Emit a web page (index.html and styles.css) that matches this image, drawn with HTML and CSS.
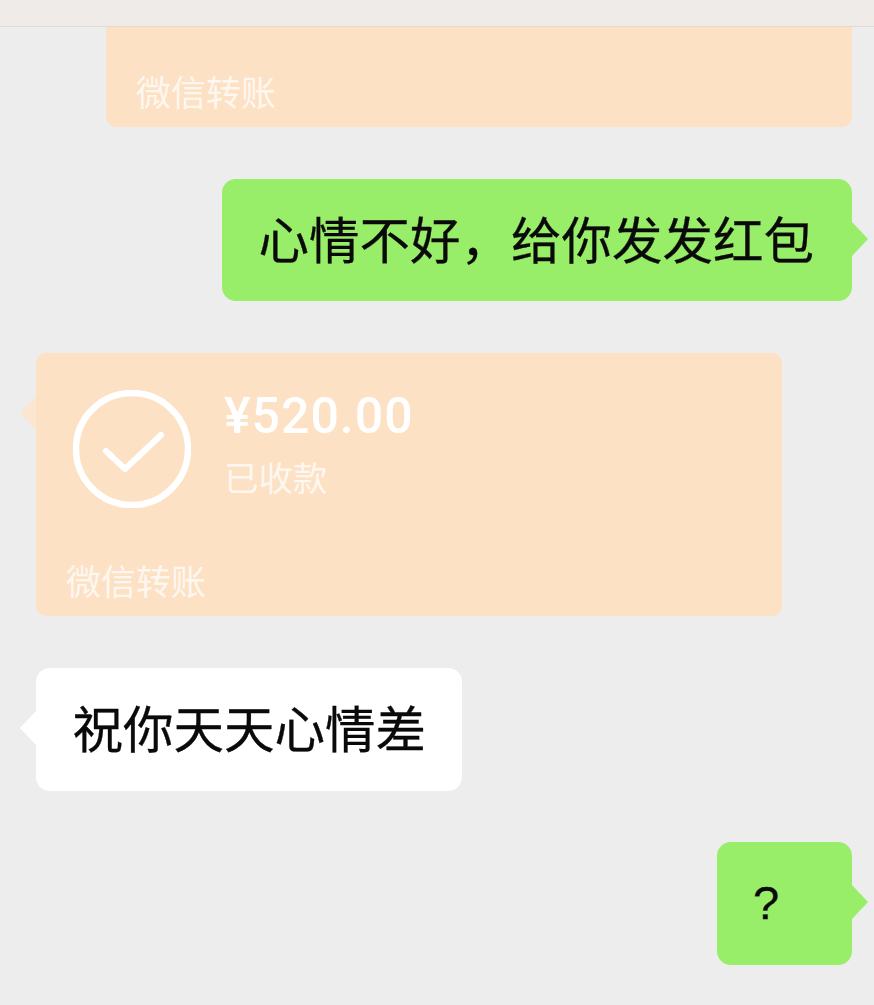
FILE: index.html
```html
<!DOCTYPE html>
<html lang="zh-CN">
<head>
<meta charset="utf-8">
<title>微信聊天</title>
<link rel="stylesheet" href="styles.css">
</head>
<body>
<div class="screen">
  <header class="topbar"></header>
  <main class="chat">
    <div class="transfer transfer-cut self">
      <div class="transfer-foot">微信转账</div>
    </div>
    <div class="bubble green self tail-right wide">心情不好，给你发发红包</div>
    <div class="transfer transfer-full other tail-left">
      <div class="transfer-main">
        <svg class="check" viewBox="0 0 118 118" aria-hidden="true">
          <circle cx="59" cy="59" r="56" fill="none" stroke="#fff" stroke-width="6.5"/>
          <path d="M33 61 L52 79 L88 45" fill="none" stroke="#fff" stroke-width="6" stroke-linecap="round" stroke-linejoin="round"/>
        </svg>
        <div class="transfer-info">
          <div class="amount">¥520.00</div>
          <div class="status">已收款</div>
        </div>
      </div>
      <div class="transfer-foot">微信转账</div>
    </div>
    <div class="bubble white other tail-left">祝你天天心情差</div>
    <div class="bubble green self tail-right tiny">?</div>
  </main>
</div>
</body>
</html>
```
FILE: styles.css
```css
* { box-sizing: border-box; }
html, body { margin: 0; padding: 0; }
body {
  width: 874px;
  height: 1005px;
  overflow: hidden;
  background: #ededed;
  font-family: "Noto Sans CJK SC", "Noto Sans", sans-serif;
}
.screen { display: flex; flex-direction: column; height: 1005px; overflow: hidden; }
.topbar {
  flex: none;
  height: 27px;
  background: #eeebe8;
  border-bottom: 1px solid #e3dbd3;
}
.chat {
  display: flex;
  flex-direction: column;
  gap: 52px;
  padding: 0 22px 0 36px;
}
.self { align-self: flex-end; }
.other { align-self: flex-start; }
.bubble {
  position: relative;
  height: 122px;
  display: flex;
  align-items: center;
  padding: 0 36px 6px 36.5px;
  font-size: 50.5px;
  line-height: 1;
  color: #0a0a0a;
  -webkit-text-stroke: 0.3px #0a0a0a;
  border-radius: 14px;
  white-space: nowrap;
}
.bubble.green { background: #98ed69; }
.bubble.white { background: #ffffff; height: 123px; }
.bubble.wide { width: 630px; }
.bubble.tiny {
  width: 135px;
  height: 123px;
  margin-top: -1px;
  padding: 0 0 2px 36px;
  font-family: "Liberation Sans", sans-serif;
  font-size: 47px;
}
.tail-right::after,
.tail-left::before {
  content: "";
  position: absolute;
  top: 43px;
  width: 16px;
  height: 34px;
}
.tail-right::after {
  left: 100%;
  background: #98ed69;
  clip-path: polygon(0 0, 100% 50%, 0 100%);
}
.tail-left::before {
  right: 100%;
  background: #ffffff;
  clip-path: polygon(100% 0, 0 50%, 100% 100%);
}
.transfer-full.tail-left::before { background: #fbe6d2; }
.transfer {
  position: relative;
  width: 746px;
  display: flex;
  flex-direction: column;
  justify-content: space-between;
  background: #fde1c4;
  border-radius: 10px;
  color: rgba(255, 255, 255, 0.75);
}
.transfer-cut { height: 100px; justify-content: flex-end; border-radius: 0 0 10px 10px; }
.transfer-full { height: 263px; }
.transfer-main {
  display: flex;
  gap: 33px;
  padding: 37px 0 0 37px;
}
.check { width: 118px; height: 118px; flex: none; }
.transfer-info { display: flex; flex-direction: column; }
.amount {
  font-family: "Roboto", sans-serif;
  font-weight: 500;
  font-size: 50px;
  line-height: 52px;
  letter-spacing: 1px;
  color: #fff;
}
.status { font-size: 34.5px; line-height: 40px; margin-top: 14px; }
.transfer-foot {
  padding: 0 0 14px 30px;
  font-size: 35px;
  line-height: 44px;
}
```
